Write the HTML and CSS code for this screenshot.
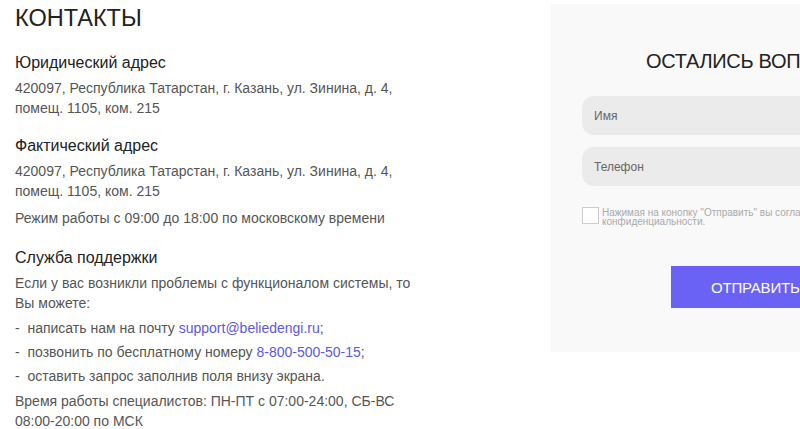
FILE: index.html
```html
<!DOCTYPE html>
<html lang="ru">
<head>
<meta charset="utf-8">
<link rel="stylesheet" href="styles.css">
</head>
<body>
<div class="page">
  <section class="contacts">
    <h1 class="title">КОНТАКТЫ</h1>
    <div class="block">
      <h2 class="subtitle">Юридический адрес</h2>
      <p class="text">420097, Республика Татарстан, г. Казань, ул. Зинина, д. 4, помещ. 1105, ком. 215</p>
    </div>
    <div class="block block-second">
      <h2 class="subtitle">Фактический адрес</h2>
      <p class="text">420097, Республика Татарстан, г. Казань, ул. Зинина, д. 4, помещ. 1105, ком. 215</p>
      <p class="text gap">Режим работы с 09:00 до 18:00 по московскому времени</p>
    </div>
    <div class="block block-third">
      <h2 class="subtitle">Служба поддержки</h2>
      <p class="text">Если у вас возникли проблемы с функционалом системы, то Вы можете:</p>
      <ul class="list">
        <li>-&nbsp; написать нам на почту <a class="link" href="#">support@beliedengi.ru</a>;</li>
        <li>-&nbsp; позвонить по бесплатному номеру <a class="link" href="#">8-800-500-50-15</a>;</li>
        <li>-&nbsp; оставить запрос заполнив поля внизу экрана.</li>
      </ul>
      <p class="text">Время работы специалистов: ПН-ПТ с 07:00-24:00, СБ-ВС 08:00-20:00 по МСК</p>
    </div>
  </section>
  <section class="panel">
    <h2 class="form-title">ОСТАЛИСЬ ВОПРОСЫ?</h2>
    <form class="form">
      <input class="field" type="text" placeholder="Имя">
      <input class="field" type="text" placeholder="Телефон">
      <label class="agree">
        <span class="box"></span>
        <span class="agree-text">Нажимая на конопку "Отправить" вы соглашаетесь с политикой конфиденциальности.</span>
      </label>
      <button class="submit" type="button">ОТПРАВИТЬ</button>
    </form>
  </section>
</div>
</body>
</html>
```
FILE: styles.css
```css
html, body {
  margin: 0;
  padding: 0;
  overflow: hidden;
  background: #fff;
}
body {
  font-family: "Liberation Sans", Arial, sans-serif;
  color: #555;
}
.page {
  display: flex;
  align-items: flex-start;
  width: 1000px;
}
.contacts {
  width: 412px;
  padding-left: 15px;
  flex-shrink: 0;
}
.title {
  margin: 4px 0 0;
  font-size: 23.5px;
  font-weight: 400;
  line-height: 28px;
  color: #222;
}
.block {
  margin-top: 21px;
}
.block-second {
  margin-top: 18px;
}
.block-third {
  margin-top: 20px;
}
.subtitle {
  margin: 0;
  font-size: 16px;
  font-weight: 400;
  line-height: 20px;
  color: #222;
}
.text {
  margin: 5px 0 0;
  font-size: 14px;
  line-height: 20px;
  color: #555;
}
.text.gap {
  margin-top: 7px;
}
.list {
  list-style: none;
  margin: 5px 0 0;
  padding: 0;
  font-size: 14px;
  line-height: 20px;
}
.list li {
  margin-bottom: 4px;
}
.link {
  color: #5d57dc;
  text-decoration: none;
}
.panel {
  margin-left: 124px;
  margin-top: 4px;
  width: 420px;
  flex-shrink: 0;
  height: 348px;
  background: #f9f9f9;
  box-sizing: border-box;
  padding: 45px 31px 0;
}
.form-title {
  margin: 0;
  padding-left: 64px;
  font-size: 20px;
  font-weight: 400;
  line-height: 24px;
  letter-spacing: -0.3px;
  white-space: nowrap;
  color: #222;
}
.form {
  margin-top: 23px;
  display: flex;
  flex-direction: column;
}
.field {
  height: 39px;
  border: none;
  border-radius: 12px;
  background: #ebebeb;
  padding: 0 12px;
  font-family: inherit;
  font-size: 12px;
  color: #555;
  margin-bottom: 12px;
  outline: none;
}
.field::placeholder {
  color: #666;
}
.agree {
  display: flex;
  align-items: flex-start;
  gap: 3px;
  margin-top: 9px;
}
.box {
  width: 15px;
  height: 15px;
  border: 1px solid #ccc;
  background: #fff;
  flex-shrink: 0;
}
.agree-text {
  font-size: 10px;
  line-height: 9px;
  color: #aaa;
  padding-top: 1px;
}
.submit {
  align-self: flex-start;
  margin-top: 40px;
  margin-left: 89px;
  padding: 0 40px;
  height: 42px;
  border: none;
  background: #6a62f4;
  color: #fff;
  font-family: inherit;
  font-size: 15px;
  letter-spacing: -0.2px;
}
```
